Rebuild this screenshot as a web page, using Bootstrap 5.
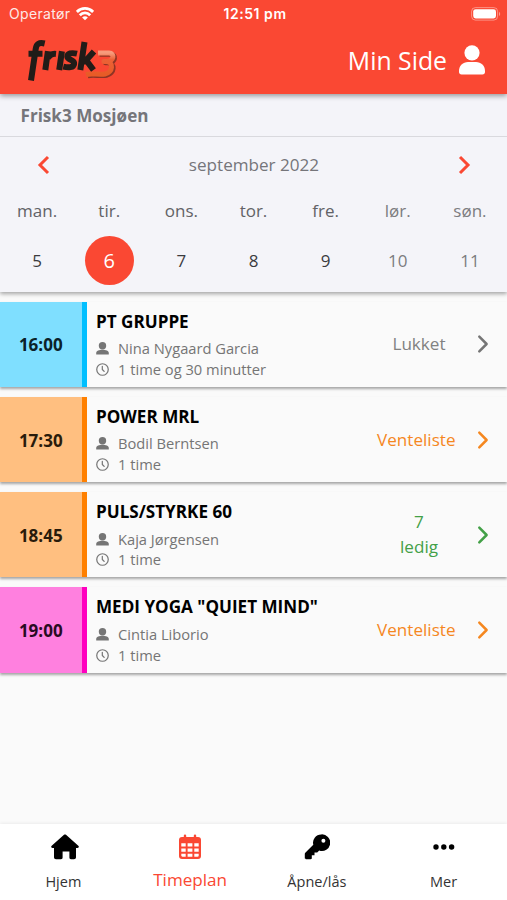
<!DOCTYPE html>
<html lang="no">
<head>
<meta charset="utf-8">
<meta name="viewport" content="width=device-width, initial-scale=1">
<title>Frisk3 Timeplan</title>
<link href="https://cdn.jsdelivr.net/npm/bootstrap@5.3.0/dist/css/bootstrap.min.css" rel="stylesheet">
<style>
  body{font-family:"Open Sans","Noto Sans",sans-serif;background:#fafafa;color:#000;font-size:17px;line-height:24px}
  svg{display:block;flex:none}
  .app{height:900px}
  .app-head{height:93.6px;background:#fa4833;box-shadow:0 2px 5px rgba(0,0,0,.38);z-index:2}
  .status{height:27px;padding:0 6px 0 9px;font-family:Inter,"Liberation Sans",sans-serif;font-size:14px;line-height:27px}
  .status>div{flex:1 1 0}
  .carrier{opacity:.88;letter-spacing:.35px}
  .clock{font-weight:600;letter-spacing:.55px}
  .brand-row{height:66px;padding:0 22px 0 22px}
  .my-page{font-size:24.8px;line-height:32px}
  .calendar{height:198px;background:#f4f4f9;box-shadow:0 2px 4px rgba(0,0,0,.34);z-index:1}
  .club{height:43px;padding:1px 20.500px 0;line-height:42px;font-size:17.1px;color:#75757a;border-bottom:1px solid #d9d9de}
  .month{height:56px;padding:0 35px 0 36px;color:#75757a;font-size:17.1px}
  .week{padding:0 1px;color:#626266;font-size:17px}
  .week>div{flex:1 1 0}
  .days{height:36px;line-height:36px}
  .dates{height:49px;margin-top:7px;color:#3b3b3f}
  .dates>div{line-height:49px}
  .week .weekend{color:#7c7c80}
  .today{width:49px;height:49px;background:#fa4833;font-size:20px;line-height:49px}
  .sessions{gap:10px;padding-top:10px}
  .session{height:85.3px;background:#fafafa;box-shadow:0 1.5px 2.5px rgba(0,0,0,.34)}
  .start{width:86.5px;border-right:5px solid;font-size:17px;padding-top:2px}
  .blue{background:#7fdfff;border-color:#00bfff;color:#0b2229}
  .orange{background:#ffbf80;border-color:#ff8000;color:#291b0b}
  .pink{background:#ff80df;border-color:#ff00bf;color:#290b22}
  .info{padding:7px 0 0 9.500px}
  .info h2{font-size:17.1px;line-height:25px;margin:0 0 4.5px}
  .meta{color:#757575;font-size:14.7px;line-height:20.8px;gap:9px}
  .state{min-width:73px;font-size:17.1px;line-height:25px;margin-right:21.500px;margin-top:-1px}
  .go{margin-right:18px}
  .closed{color:#818181}.closed+.go{color:#757575}
  .waiting,.waiting+.go{color:#f5871f}
  .free,.free+.go{color:#43a047}
  .bottom{height:76px;background:#fff;box-shadow:0 -1px 3px rgba(0,0,0,.06)}
  .bottom a{flex:1 1 0;color:#000;font-size:14.5px;line-height:20px;padding-top:10px}
  .bottom a span{margin-top:12px;color:#333}
  .bottom a.current span{font-size:17.1px;line-height:22px;margin-top:9px;color:#fa4833}
</style>
<script src="https://cdn.jsdelivr.net/npm/bootstrap@5.3.0/dist/js/bootstrap.bundle.min.js"></script>
</head>
<body>
<svg width="0" height="0" class="position-absolute" aria-hidden="true">
  <symbol id="person" viewBox="0 0 26 30"><circle cx="13" cy="7.800" r="7.600"/><path d="M0 27v-1c0-5.500 4-9 9-9h8c5 0 9 3.500 9 9v1c0 1.500-1 2.500-2.500 2.500h-21C1 29.500 0 28.500 0 27z"/></symbol>
  <symbol id="trainer" viewBox="0 0 13 13"><circle cx="6.500" cy="3.800" r="3.700"/><path d="M.2 12.600v-1.600c0-2 3-3.200 6.300-3.200s6.300 1.200 6.300 3.200v1.600z"/></symbol>
  <symbol id="clock" viewBox="0 0 14 14"><g fill="none" stroke="currentColor" stroke-width="1.300" stroke-linecap="round" stroke-linejoin="round"><circle cx="7" cy="7" r="6.200"/><path d="M6.800 3.600V7l2 2"/></g></symbol>
  <symbol id="chevron" viewBox="0 0 12 20"><path d="M2.300 2.700L9.600 10l-7.300 7.300" fill="none" stroke="currentColor" stroke-width="2.500" stroke-linecap="round" stroke-linejoin="round"/></symbol>
</svg>
<div class="app d-flex flex-column overflow-hidden">
  <header class="app-head position-relative text-white flex-shrink-0">
    <div class="status d-flex">
      <div class="d-flex align-items-center gap-2"><span class="carrier">Operatør</span>
        <svg width="18" height="14" viewBox="0 0 18 14" fill="none" stroke="#fff" stroke-width="2.800" style="margin-left:-2px"><path d="M.9 4.900c4.600-4.600 11.600-4.600 16.200 0M3.800 8.200c3-3 7.400-3 10.400 0"/><path d="M9 13.300l-2.900-2.900c1.700-1.500 4.100-1.500 5.800 0z" fill="#fff" stroke="none"/></svg>
      </div>
      <div class="clock text-center">12:51 pm</div>
      <div class="d-flex justify-content-end align-items-center">
        <svg width="30" height="14" viewBox="0 0 30 14"><rect x=".6" y=".6" width="26" height="12.500" rx="3.800" fill="none" stroke="#fff" stroke-opacity=".4"/><rect x="2.200" y="2.200" width="22.800" height="9.300" rx="2.400" fill="#fff"/><path d="M28 4.700c1.600.8 1.600 3.500 0 4.300z" fill="#fff" fill-opacity=".45"/></svg>
      </div>
    </div>
    <div class="brand-row d-flex align-items-center justify-content-between">
      <svg width="100" height="50" viewBox="0 0 100 50" role="img" aria-label="frisk3">
        <defs><linearGradient id="three" x2="0" y2="1"><stop stop-color="#f79b7c"/><stop offset=".3" stop-color="#ec6237"/><stop offset="1" stop-color="#e85b26"/></linearGradient></defs>
        <g fill="none" stroke-linejoin="round"><path d="M76 18h11c6 0 5 8.500-2 8.500h-3 2c8 0 7 11-1 12.500-6 1-14-1-19 .5" stroke="#8f3424" stroke-width="5" transform="translate(1.600 1.300)"/><path d="M76 18h11c6 0 5 8.500-2 8.500h-3 2c8 0 7 11-1 12.500-6 1-14-1-19 .5" stroke="url(#three)" stroke-width="5"/></g>
        <g fill="none" stroke="#211c18" stroke-width="6"><path d="M9 45.500L13.700 14c.7-5.300 3.500-6.800 9-5.500M6.500 18.800h14"/><path d="M23.300 35l2.600-18.800M26 23.500c1.500-3.800 4-5 8-4.600M37.200 35l2.700-18.800"/><path d="M55 18.700c-5.600-1.300-9.600-.4-9.700 3-.1 3.500 7.400 2.900 6.800 7-.5 4-5.700 4.100-10.800 2.900"/><path d="M58.300 35L62.500 7M60.500 26.500h2.500l9-10M64 25l7.500 10"/></g>
      </svg>
      <div class="d-flex align-items-center my-page"><span class="me-2 pe-1">Min Side</span><svg width="26" height="30" fill="#fff"><use href="#person"/></svg></div>
    </div>
  </header>

  <section class="calendar position-relative flex-shrink-0">
    <div class="club fw-bold">Frisk3 Mosjøen</div>
    <div class="month d-flex align-items-center justify-content-between">
      <svg width="14" height="20" viewBox="0 0 14 20" fill="none" stroke="#fa4833" stroke-width="3"><path d="M12 2l-8 8 8 8"/></svg>
      <span>september 2022</span>
      <svg width="14" height="20" viewBox="0 0 14 20" fill="none" stroke="#fa4833" stroke-width="3"><path d="M2 2l8 8-8 8"/></svg>
    </div>
    <div class="week days d-flex text-center"><div>man.</div><div>tir.</div><div>ons.</div><div>tor.</div><div>fre.</div><div class="weekend">lør.</div><div class="weekend">søn.</div></div>
    <div class="week dates d-flex text-center"><div>5</div><div><span class="today d-block mx-auto rounded-circle text-white">6</span></div><div>7</div><div>8</div><div>9</div><div class="weekend">10</div><div class="weekend">11</div></div>
  </section>

  <main class="sessions d-flex flex-column flex-grow-1">
    <article class="session d-flex align-items-center">
      <div class="start blue h-100 d-flex align-items-center justify-content-center fw-bold">16:00</div>
      <div class="info flex-grow-1 align-self-start"><h2 class="fw-bold">PT GRUPPE</h2>
        <div class="meta d-flex align-items-center"><svg width="13" height="13" fill="currentColor"><use href="#trainer"/></svg>Nina Nygaard Garcia</div>
        <div class="meta d-flex align-items-center"><svg width="13" height="13"><use href="#clock"/></svg>1 time og 30 minutter</div></div>
      <div class="state closed text-center">Lukket</div><svg class="go" width="12" height="20"><use href="#chevron"/></svg>
    </article>
    <article class="session d-flex align-items-center">
      <div class="start orange h-100 d-flex align-items-center justify-content-center fw-bold">17:30</div>
      <div class="info flex-grow-1 align-self-start"><h2 class="fw-bold">POWER MRL</h2>
        <div class="meta d-flex align-items-center"><svg width="13" height="13" fill="currentColor"><use href="#trainer"/></svg>Bodil Berntsen</div>
        <div class="meta d-flex align-items-center"><svg width="13" height="13"><use href="#clock"/></svg>1 time</div></div>
      <div class="state waiting text-center">Venteliste</div><svg class="go" width="12" height="20"><use href="#chevron"/></svg>
    </article>
    <article class="session d-flex align-items-center">
      <div class="start orange h-100 d-flex align-items-center justify-content-center fw-bold">18:45</div>
      <div class="info flex-grow-1 align-self-start"><h2 class="fw-bold">PULS/STYRKE 60</h2>
        <div class="meta d-flex align-items-center"><svg width="13" height="13" fill="currentColor"><use href="#trainer"/></svg>Kaja Jørgensen</div>
        <div class="meta d-flex align-items-center"><svg width="13" height="13"><use href="#clock"/></svg>1 time</div></div>
      <div class="state free text-center">7<br>ledig</div><svg class="go" width="12" height="20"><use href="#chevron"/></svg>
    </article>
    <article class="session d-flex align-items-center">
      <div class="start pink h-100 d-flex align-items-center justify-content-center fw-bold">19:00</div>
      <div class="info flex-grow-1 align-self-start"><h2 class="fw-bold">MEDI YOGA "QUIET MIND"</h2>
        <div class="meta d-flex align-items-center"><svg width="13" height="13" fill="currentColor"><use href="#trainer"/></svg>Cintia Liborio</div>
        <div class="meta d-flex align-items-center"><svg width="13" height="13"><use href="#clock"/></svg>1 time</div></div>
      <div class="state waiting text-center">Venteliste</div><svg class="go" width="12" height="20"><use href="#chevron"/></svg>
    </article>
  </main>

  <nav class="bottom d-flex flex-shrink-0">
    <a class="d-flex flex-column align-items-center text-decoration-none" href="#"><svg width="28" height="26" viewBox="0 0 28 26" class="ms-1"><path d="M13 .8c.6-.5 1.400-.5 2 0l12.300 11c1 .9.500 2.200-.8 2.200H25v9.200c0 1.200-.8 2-2 2h-3c-1 0-1.600-.7-1.600-1.600v-6h-6.800v6c0 .9-.6 1.600-1.600 1.600H5c-1.200 0-2-.8-2-2V14H1.500c-1.300 0-1.800-1.300-.8-2.200z"/></svg><span>Hjem</span></a>
    <a class="current d-flex flex-column align-items-center text-decoration-none" href="#"><svg width="22" height="26" viewBox="0 0 22 26"><path d="M3 3h16a3 3 0 0 1 3 3v16a3 3 0 0 1-3 3H3a3 3 0 0 1-3-3V6a3 3 0 0 1 3-3z" fill="#fa4833"/><path d="M6 1.600V5M16 1.600V5" stroke="#fa4833" stroke-width="2.400" stroke-linecap="round"/><path d="M2.300 9.300h4.400v3.200H2.300zM8.600 9.300h4.800v3.200H8.600zM15.300 9.300h4.400v3.200h-4.400zM2.300 14.500h4.400v3.200H2.300zM8.600 14.500h4.800v3.200H8.600zM15.300 14.500h4.400v3.200h-4.400zM2.300 19.700h4.400v3.100H3.500c-.8 0-1.200-.4-1.200-1.200zM8.600 19.700h4.800v3.100H8.600zM15.300 19.700h4.400v1.900c0 .8-.4 1.200-1.200 1.200h-3.200z" fill="#fff"/></svg><span>Timeplan</span></a>
    <a class="d-flex flex-column align-items-center text-decoration-none" href="#"><svg width="26" height="26" viewBox="0 0 26 26"><path fill-rule="evenodd" d="M17.200.4a8.300 8.300 0 1 1-2 16.100l-2 2h-2.700v2.700H7.800V24c0 .8-.4 1.200-1.200 1.200H2c-.8 0-1.200-.4-1.200-1.200v-4c0-.5.200-.8.500-1.200l8-8A8.300 8.300 0 0 1 17.200.4zm2.200 4.300a2 2 0 1 0 0 4 2 2 0 0 0 0-4z"/></svg><span>Åpne/lås</span></a>
    <a class="d-flex flex-column align-items-center text-decoration-none" href="#"><svg width="22" height="26" viewBox="0 0 22 26"><circle cx="3" cy="13" r="2.700"/><circle cx="10.800" cy="13" r="2.700"/><circle cx="18.600" cy="13" r="2.700"/></svg><span>Mer</span></a>
  </nav>
</div>
</body>
</html>
